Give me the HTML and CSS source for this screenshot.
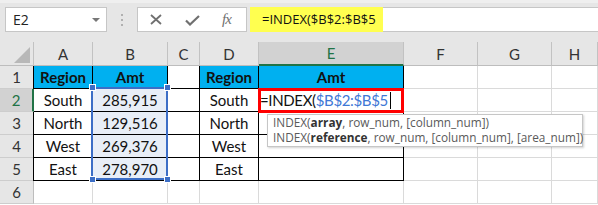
FILE: index.html
```html
<!DOCTYPE html>
<html lang="en">
<head>
    <meta charset="UTF-8">
    <title>INDEX</title>
    <link rel="stylesheet" href="styles.css">
</head>
<body>
<div class="topbar">
    <div class="namebox">
        <span class="nb_text">E2</span>
        <svg class="nb_arrow" width="8" height="5" viewBox="0 0 8 5"><polygon points="0,0 8,0 4,4" fill="#777"/></svg>
    </div>
    <div class="grip"><i></i><i></i><i></i></div>
    <div class="fbtns">
        <svg class="ic_x" width="12" height="11" viewBox="0 0 12 11"><path d="M1 1 L11 10 M11 1 L1 10" stroke="#707070" stroke-width="1.8" fill="none"/></svg>
        <svg class="ic_ok" width="15" height="11" viewBox="0 0 15 11"><path d="M1 5.5 L5 9.5 L14 1" stroke="#707070" stroke-width="2.2" fill="none"/></svg>
        <span class="fx">fx</span>
    </div>
    <div class="finput"><span class="fhl">=INDEX($B$2:$B$5</span></div>
</div>
<div class="sheet">
    <div class="grid">
        <div class="c corner"><svg width="16" height="16" viewBox="0 0 16 16"><polygon points="16,0 16,16 0,16" fill="#b8b8b8"/></svg></div>
        <div class="c h">A</div>
        <div class="c h">B</div>
        <div class="c h">C</div>
        <div class="c h">D</div>
        <div class="c h sel">E</div>
        <div class="c h">F</div>
        <div class="c h">G</div>
        <div class="c h">H</div>

        <div class="c r">1</div>
        <div class="c t hd tl">Region</div>
        <div class="c t hd">Amt</div>
        <div class="c t"></div>
        <div class="c t hd tl">Region</div>
        <div class="c t hd">Amt</div>
        <div class="c"></div>
        <div class="c"></div>
        <div class="c"></div>

        <div class="c r sel">2</div>
        <div class="c t">South</div>
        <div class="c t s">285,915</div>
        <div class="c t"></div>
        <div class="c t tl">South</div>
        <div class="c t edit"><span>=INDEX(</span><span class="ref">$B$2:$B$5</span><span class="caret"></span></div>
        <div class="c"></div>
        <div class="c"></div>
        <div class="c"></div>

        <div class="c r">3</div>
        <div class="c t tl">North</div>
        <div class="c t s">129,516</div>
        <div class="c t"></div>
        <div class="c t tl">North</div>
        <div class="c t"></div>
        <div class="c"></div>
        <div class="c"></div>
        <div class="c"></div>

        <div class="c r">4</div>
        <div class="c t tl">West</div>
        <div class="c t s">269,376</div>
        <div class="c t"></div>
        <div class="c t tl">West</div>
        <div class="c t"></div>
        <div class="c"></div>
        <div class="c"></div>
        <div class="c"></div>

        <div class="c r">5</div>
        <div class="c t tl">East</div>
        <div class="c t s">278,970</div>
        <div class="c t"></div>
        <div class="c t tl">East</div>
        <div class="c t"></div>
        <div class="c"></div>
        <div class="c"></div>
        <div class="c"></div>

        <div class="c r">6</div>
        <div class="c"></div>
        <div class="c"></div>
        <div class="c"></div>
        <div class="c"></div>
        <div class="c"></div>
        <div class="c"></div>
        <div class="c"></div>
        <div class="c"></div>
    </div>

    <div class="selection"></div>
    <div class="handle h_tl"></div>
    <div class="handle h_tr"></div>
    <div class="handle h_bl"></div>
    <div class="handle h_br"></div>
    <div class="active_box"></div>
    <div class="tooltip">
        <div>INDEX(<b>array</b>, row_num, [column_num])</div>
        <div>INDEX(<b>reference</b>, row_num, [column_num], [area_num])</div>
    </div>
</div>
</body>
</html>
```

FILE: styles.css
```css
html, body{
    margin: 0;
    padding: 0;
}
body{
    width: 598px;
    height: 205px;
    overflow: hidden;
    background: #ffffff;
    font-family: "Open Sans", "Noto Sans", sans-serif;
}
.topbar{
    box-sizing: border-box;
    height: 42px;
    background: #e6e6e6;
    border-top: 3px solid #efefef;
    padding-top: 4px;
    display: flex;
    align-items: flex-start;
}
.namebox{
    box-sizing: border-box;
    margin-left: 5px;
    width: 102px;
    height: 25px;
    background: #ffffff;
    border: 1px solid #c6c6c6;
    display: flex;
    align-items: center;
    justify-content: space-between;
    padding: 0 6px 0 7px;
    font-size: 14px;
    color: #222;
}
.nb_arrow{
    margin-top: 1px;
}
.grip{
    width: 30px;
    height: 25px;
    display: flex;
    flex-direction: column;
    align-items: center;
    justify-content: center;
    gap: 3px;
}
.grip>i{
    display: block;
    width: 2px;
    height: 2px;
    background: #b0b0b0;
}
.fbtns{
    box-sizing: border-box;
    width: 110px;
    height: 25px;
    background: #ffffff;
    border: 1px solid #c6c6c6;
    display: flex;
    align-items: center;
    padding-left: 12px;
}
.ic_ok{
    margin-left: 23px;
    margin-top: 1px;
}
.fx{
    margin-left: 22px;
    font-family: "Liberation Serif", serif;
    font-style: italic;
    font-size: 15px;
    color: #707070;
    letter-spacing: -1px;
}
.finput{
    box-sizing: border-box;
    margin-left: 3px;
    flex: 1;
    height: 25px;
    background: #ffffff;
    border-top: 1px solid #c6c6c6;
    border-bottom: 1px solid #c6c6c6;
    display: flex;
}
.fhl{
    box-sizing: border-box;
    width: 133px;
    margin-top: -1px;
    height: 25px;
    background: #ffff50;
    padding-left: 12px;
    line-height: 25px;
    font-size: 13px;
    color: #111;
}
.sheet{
    position: relative;
}
.grid{
    display: grid;
    grid-template-columns: 34px 59px 75px 32px 59px 145px 74px 74px 1fr;
    grid-template-rows: 24px repeat(6, 23px);
}
.c{
    box-sizing: border-box;
    border-right: 1px solid #dadada;
    border-bottom: 1px solid #dadada;
    display: flex;
    align-items: center;
    justify-content: center;
    font-family: Lato, "Open Sans", sans-serif;
    font-size: 15px;
    color: #111;
    overflow: hidden;
    white-space: nowrap;
}
.c.h{
    background: #e6e6e6;
    border-right-color: #c2c2c2;
    border-bottom-color: #bdbdbd;
    color: #333;
}
.c.h.sel{
    background: #d2d2d2;
    color: #217346;
    border-bottom: 2px solid #217346;
}
.c.corner{
    background: #e6e6e6;
    border-right-color: #c2c2c2;
    border-bottom-color: #bdbdbd;
    align-items: flex-end;
    justify-content: flex-end;
    padding: 0 3px 2px 0;
}
.c.r{
    background: #e6e6e6;
    border-right-color: #bdbdbd;
    border-bottom-color: #cdcdcd;
    color: #333;
}
.c.r.sel{
    background: #d2d2d2;
    color: #217346;
    border-right: 2px solid #217346;
}
.c.t{
    border-right-color: #000;
    border-bottom-color: #000;
}
.c.tl{
    box-shadow: -1px 0 0 #000;
}
.c.hd{
    background: #00b0f0;
    font-weight: bold;
}
.c.s{
    background: #e8eef7;
}
.c.edit{
    justify-content: flex-start;
    padding-left: 1px;
    letter-spacing: -0.35px;
}
.edit>.ref{
    color: #3f78d6;
}
.edit>.caret{
    display: inline-block;
    width: 1px;
    height: 17px;
    margin-left: 2px;
    background: #000;
}
.selection{
    position: absolute;
    left: 91px;
    top: 45px;
    width: 77px;
    height: 93px;
    box-sizing: border-box;
    border: 2px solid #3c6ec6;
}
.handle{
    position: absolute;
    width: 5px;
    height: 5px;
    background: #3c6ec6;
    box-shadow: 0 0 0 1px #ffffff;
}
.h_tl{ left: 90px; top: 43px; }
.h_tr{ left: 165px; top: 43px; }
.h_bl{ left: 90px; top: 135px; }
.h_br{ left: 165px; top: 135px; }
.active_box{
    position: absolute;
    left: 258px;
    top: 46px;
    width: 146px;
    height: 25px;
    box-sizing: border-box;
    border: 3px solid #ff0000;
}
.tooltip{
    position: absolute;
    left: 267px;
    top: 72px;
    width: 316px;
    height: 33px;
    box-sizing: border-box;
    background: #ffffff;
    border: 1px solid #c6c6c6;
    box-shadow: 1px 1px 2px rgba(0, 0, 0, 0.18);
    padding: 0 0 0 5px;
    font-family: "Open Sans", sans-serif;
    font-size: 11.8px;
    line-height: 15px;
    color: #5a5a5a;
    white-space: nowrap;
}
.tooltip b{
    color: #333;
}
```
